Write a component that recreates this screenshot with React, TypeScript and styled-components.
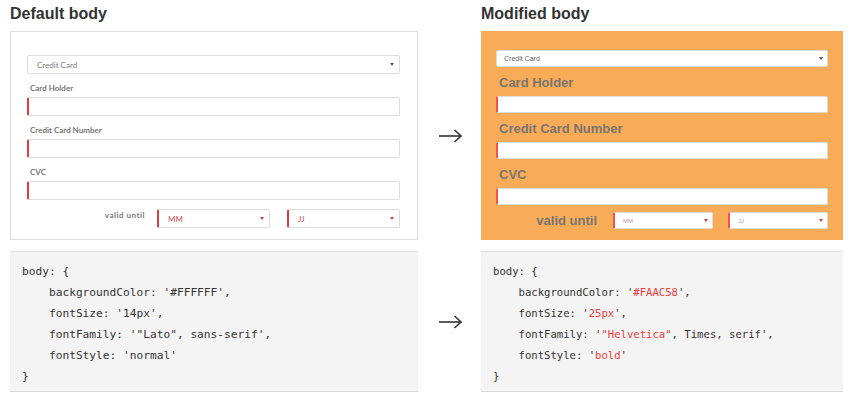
import React from "react";
import styled, { createGlobalStyle, css } from "styled-components";

const Global = createGlobalStyle`
  html, body { margin: 0; padding: 0; background: #ffffff; }
  body { font-family: "Liberation Sans", Arial, sans-serif; }
  * { box-sizing: border-box; }
`;

type Variant = "default" | "modified";

const Page = styled.div`
  display: grid;
  grid-template-columns: 408px 63px 362px;
  padding-left: 10px;
  width: 855px;
`;

const Heading = styled.h2`
  margin: 0;
  height: 31px;
  padding-top: 5px;
  font-family: "Liberation Sans", Arial, sans-serif;
  font-weight: 700;
  font-size: 16px;
  line-height: 18px;
  color: #333;
`;

const ArrowCell = styled.div<{ $offset?: number }>`
  display: flex;
  align-items: center;
  justify-content: center;
  padding-left: 1px;
  padding-top: ${(p) => p.$offset ?? 0}px;
`;

const Panel = styled.div<{ $v: Variant }>`
  display: flex;
  flex-direction: column;
  ${(p) =>
    p.$v === "default"
      ? css`
          background: #ffffff;
          border: 1px solid #dedede;
          padding: 23px 17px 11px 16px;
          font-family: "Lato", sans-serif;
        `
      : css`
          background: #f9ac58;
          padding: 19px 15px 11px 15px;
          font-family: "Liberation Sans", Helvetica, Arial, sans-serif;
        `}
`;

const SelectBox = styled.div<{ $v: Variant; $flag?: boolean; $w?: number }>`
  display: flex;
  align-items: center;
  justify-content: space-between;
  background: #fff;
  border: 1px solid #dcdcdc;
  border-radius: 2px;
  ${(p) => (p.$w ? `width: ${p.$w}px; flex: none;` : "")}
  ${(p) =>
    p.$flag &&
    css`
      border-left: 2px solid ${p.$v === "default" ? "#e23b3b" : "#f5504a"};
    `}
  ${(p) =>
    p.$v === "default"
      ? css`
          height: 19px;
          padding: 0 5px 0 9px;
        `
      : css`
          height: 17px;
          padding: 0 4px 0 ${p.$flag ? 8 : 7}px;
        `}
`;

const SelectText = styled.span<{ $v: Variant; $red?: boolean }>`
  ${(p) =>
    p.$v === "default"
      ? css`
          font-family: "Lato", sans-serif;
          font-size: 8px;
          color: ${p.$red ? "#d05050" : "#7c7c7c"};
        `
      : css`
          font-family: "Liberation Sans", Helvetica, sans-serif;
          font-size: ${p.$red ? 6 : 7}px;
          color: ${p.$red ? "#c9979a" : "#666"};
        `}
  line-height: 1;
`;

const Caret = styled.span<{ $red?: boolean }>`
  width: 0;
  height: 0;
  border-left: 2px solid transparent;
  border-right: 2px solid transparent;
  border-top: 3px solid ${(p) => (p.$red ? "#c44" : "#555")};
`;

const Label = styled.div<{ $v: Variant }>`
  font-weight: 700;
  ${(p) =>
    p.$v === "default"
      ? css`
          font-family: "Lato", sans-serif;
          font-size: 8px;
          line-height: 10px;
          color: #777;
          margin: 9px 0 4px 3px;
        `
      : css`
          font-family: "Liberation Sans", Helvetica, sans-serif;
          font-size: 13px;
          line-height: 15px;
          color: #7a7570;
          margin: 8px 0 6px 3px;
        `}
`;

const Input = styled.div<{ $v: Variant }>`
  background: #fff;
  border: 1px solid #dcdcdc;
  border-radius: 2px;
  ${(p) =>
    p.$v === "default"
      ? css`
          height: 19px;
          border-left: 2px solid #e23b3b;
        `
      : css`
          height: 17px;
          border-left: 2px solid #f5504a;
        `}
`;

const DateRow = styled.div<{ $v: Variant }>`
  display: flex;
  justify-content: flex-end;
  ${(p) =>
    p.$v === "default"
      ? css`
          align-items: flex-start;
          gap: 17px;
          margin-top: 9px;
        `
      : css`
          align-items: center;
          gap: 15px;
          margin-top: 7px;
        `}
`;

const RowLabel = styled.span<{ $v: Variant }>`
  font-weight: 700;
  ${(p) =>
    p.$v === "default"
      ? css`
          font-family: "Lato", sans-serif;
          font-size: 8px;
          letter-spacing: 0.5px;
          line-height: 10px;
          color: #777;
          margin-right: -5px;
          padding-top: 1px;
        `
      : css`
          font-family: "Liberation Sans", Helvetica, sans-serif;
          font-size: 13px;
          line-height: 15px;
          color: #7a7570;
          margin-right: 1px;
        `}
`;

const CodeBlock = styled.pre<{ $size: number }>`
  margin: 11px 0 0 0;
  background: #f4f4f4;
  border-top: 1px solid #e2e2e2;
  border-bottom: 1px solid #dadada;
  padding: 9px 12px 4px 12px;
  font-family: "DejaVu Sans Mono", "Liberation Mono", monospace;
  font-size: ${(p) => p.$size}px;
  line-height: 21px;
  color: #333;
  white-space: pre;
  overflow: hidden;
`;

const Hl = styled.span`
  color: #ea3b3b;
`;

const Arrow = () => (
  <svg width="25" height="14" viewBox="0 0 25 14" fill="none">
    <line x1="1" y1="7" x2="23" y2="7" stroke="#333" strokeWidth="1.6" />
    <polyline
      points="16.5,1 23,7 16.5,13"
      stroke="#333"
      strokeWidth="1.6"
      strokeLinejoin="miter"
      fill="none"
    />
  </svg>
);

const Form = ({ v }: { v: Variant }) => {
  const dateW = v === "default" ? 113 : 100;
  return (
    <Panel $v={v}>
      <SelectBox $v={v}>
        <SelectText $v={v}>Credit Card</SelectText>
        <Caret />
      </SelectBox>
      <Label $v={v}>Card Holder</Label>
      <Input $v={v} />
      <Label $v={v}>Credit Card Number</Label>
      <Input $v={v} />
      <Label $v={v}>CVC</Label>
      <Input $v={v} />
      <DateRow $v={v}>
        <RowLabel $v={v}>valid until</RowLabel>
        <SelectBox $v={v} $flag $w={dateW}>
          <SelectText $v={v} $red>
            MM
          </SelectText>
          <Caret $red />
        </SelectBox>
        <SelectBox $v={v} $flag $w={dateW}>
          <SelectText $v={v} $red>
            JJ
          </SelectText>
          <Caret $red />
        </SelectBox>
      </DateRow>
    </Panel>
  );
};

export default function App() {
  return (
    <>
      <Global />
      <Page>
        <Heading>Default body</Heading>
        <div />
        <Heading>Modified body</Heading>

        <Form v="default" />
        <ArrowCell>
          <Arrow />
        </ArrowCell>
        <Form v="modified" />

        <CodeBlock $size={11.2}>
          {`body: {
    backgroundColor: '#FFFFFF',
    fontSize: '14px',
    fontFamily: '"Lato", sans-serif',
    fontStyle: 'normal'
}`}
        </CodeBlock>
        <ArrowCell $offset={11}>
          <Arrow />
        </ArrowCell>
        <CodeBlock $size={10.6}>
          {`body: {
    backgroundColor: '`}
          <Hl>#FAAC58</Hl>
          {`',
    fontSize: '`}
          <Hl>25px</Hl>
          {`',
    fontFamily: '`}
          <Hl>"Helvetica"</Hl>
          {`, Times, serif',
    fontStyle: '`}
          <Hl>bold</Hl>
          {`'
}`}
        </CodeBlock>
      </Page>
    </>
  );
}
